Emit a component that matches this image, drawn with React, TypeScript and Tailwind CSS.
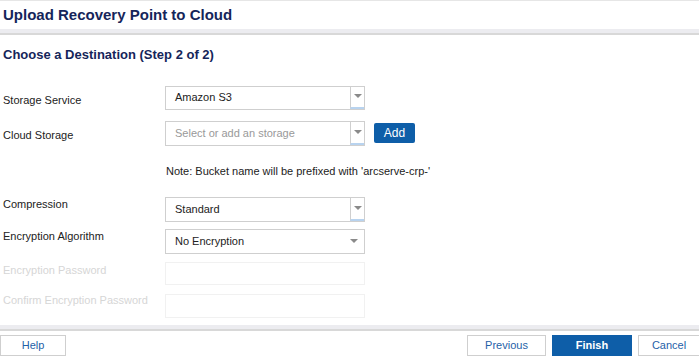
import React from 'react'

function Caret() {
  return (
    <svg width="8" height="5" viewBox="0 0 8 5" className="block">
      <path d="M0 0 L8 0 L4 4 Z" fill="#8a8a8a" />
    </svg>
  )
}

function Select({ value, placeholder, split = true }: { value?: string; placeholder?: string; split?: boolean }) {
  return (
    <div className="flex h-full w-[200px] items-stretch border border-[#cfcfcf] bg-white">
      <div className={'flex flex-1 items-center pl-[9px] text-[11px] ' + (value ? 'text-[#222]' : 'text-[#999]')}>
        {value ?? placeholder}
      </div>
      {split ? (
        <div className="flex w-[14px] items-center justify-center border-l border-[#cfcfcf] border-b-2 border-b-[#b8d3ef]">
          <Caret />
        </div>
      ) : (
        <div className="flex w-[14px] items-center justify-center mr-[3px]">
          <Caret />
        </div>
      )}
    </div>
  )
}

function Row({ label, dim, top, h, labelPad, children }: { label: string; dim?: boolean; top: string; h: string; labelPad: string; children: React.ReactNode }) {
  return (
    <div className={'flex ' + top + ' ' + h}>
      <div className={'w-[165px] shrink-0 pl-[3px] text-[11px] ' + labelPad + ' ' + (dim ? 'text-[#d6d6d6]' : 'text-[#222]')}>
        {label}
      </div>
      {children}
    </div>
  )
}

export default function App() {
  return (
    <div className="flex h-[360px] w-[699px] flex-col bg-white font-['Liberation_Sans',Arial,sans-serif]">
      {/* header */}
      <div className="h-[2px] border-t border-[#e6e6e6]" />
      <div className="flex h-[27px] items-center pl-[3px] text-[15px] font-bold text-[#15255a]">
        Upload Recovery Point to Cloud
      </div>
      <div className="h-[6px] border-b-2 border-[#d8d8d8] bg-[#ececf0]" />

      {/* body */}
      <div className="flex-1">
        <div className="pl-[3px] pt-[10px] text-[13px] font-bold text-[#15255a]">Choose a Destination (Step 2 of 2)</div>

        <Row label="Storage Service" top="mt-[21px]" h="h-[24px]" labelPad="pt-[6px]">
          <Select value="Amazon S3" />
        </Row>
        <Row label="Cloud Storage" top="mt-[11px]" h="h-[25px]" labelPad="pt-[6px]">
          <Select placeholder="Select or add an storage" />
          <button className="ml-[9px] mt-[2px] h-[20px] w-[41px] rounded-[2px] bg-[#0e5ea8] text-[12px] text-white">Add</button>
        </Row>
        <div className="mt-[17px] pl-[166px] text-[11px] text-[#222]">Note: Bucket name will be prefixed with 'arcserve-crp-'</div>

        <Row label="Compression" top="mt-[18px]" h="h-[25px]" labelPad="-mt-[1px]">
          <Select value="Standard" />
        </Row>
        <Row label="Encryption Algorithm" top="mt-[7px]" h="h-[25px]" labelPad="-mt-[1px]">
          <Select value="No Encryption" split={false} />
        </Row>
        <Row label="Encryption Password" dim top="mt-[8px]" h="h-[23px]" labelPad="pt-0">
          <div className="h-full w-[200px] border border-[#f1f1f1]" />
        </Row>
        <Row label="Confirm Encryption Password" dim top="mt-[9px]" h="h-[24px]" labelPad="-mt-[2px]">
          <div className="h-full w-[200px] border border-[#f1f1f1]" />
        </Row>
      </div>

      {/* footer */}
      <div className="h-[6px] border-b-2 border-[#d8d8d8] bg-[#ececf0]" />
      <div className="flex h-[29px] items-start pt-[4px]">
        <button className="h-[21px] w-[66px] border border-[#cfcfcf] bg-white text-[11px] text-[#1f5fa8]">Help</button>
        <div className="ml-auto flex gap-[6px] -mr-[1px]">
          <button className="h-[21px] w-[79px] border border-[#cfcfcf] bg-white text-[11px] text-[#1f5fa8]">Previous</button>
          <button className="h-[21px] w-[80px] bg-[#0e5ea8] text-[11px] font-semibold text-white">Finish</button>
          <button className="h-[21px] w-[62px] border border-[#cfcfcf] bg-white text-[11px] text-[#1f5fa8]">Cancel</button>
        </div>
      </div>
    </div>
  )
}
